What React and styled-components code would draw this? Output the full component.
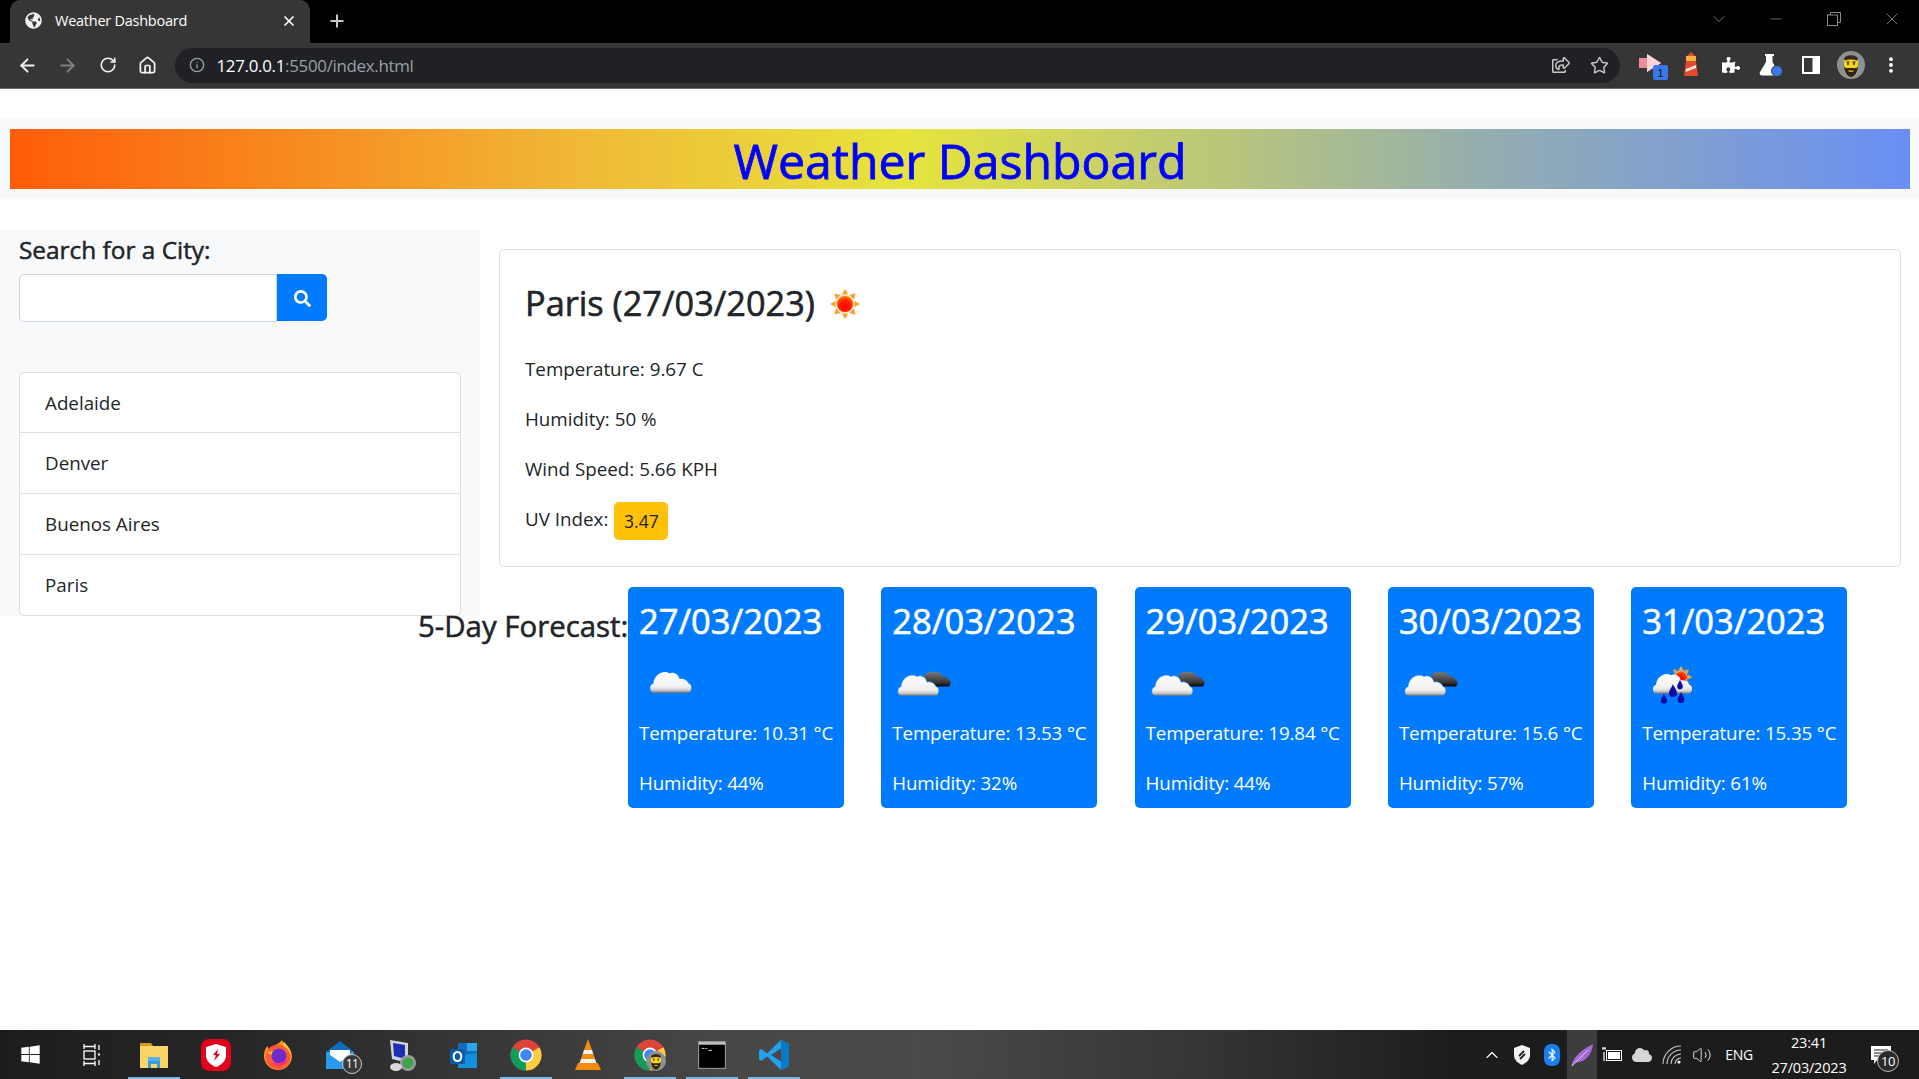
import React from 'react';
import styled, { createGlobalStyle } from 'styled-components';
import { ArrowLeft, ArrowRight, RotateCw, Home, Info, Star, MoreVertical, X, Plus, ChevronDown, Minus, ChevronUp, Volume2 } from 'lucide-react';
import { FaGlobeAmericas, FaSearch, FaPuzzlePiece, FaRegShareSquare, FaWindows, FaBluetoothB, FaCloud } from 'react-icons/fa';

const GlobalStyle = createGlobalStyle`
  html, body { margin: 0; padding: 0; height: 100%; background: #fff; }
  #root { height: 100%; }
  * { box-sizing: border-box; }
`;

const FONT = `"Open Sans", "Noto Sans", "Liberation Sans", sans-serif`;

const Screen = styled.div`
  height: 100vh;
  display: flex;
  flex-direction: column;
  overflow: hidden;
  font-family: ${FONT};
  color: #212529;
`;

/* browser frame */
const TabStrip = styled.div`
  height: 43px;
  background: #000;
  display: flex;
  align-items: flex-end;
  padding-left: 10px;
  flex-shrink: 0;
`;

const Tab = styled.div`
  width: 300px;
  height: 43px;
  background: #363636;
  border-radius: 10px 10px 0 0;
  display: flex;
  align-items: center;
  padding: 0 13px 2px 15px;
  color: #fff;
  font-size: 14.5px;
  letter-spacing: -0.25px;
`;

const TabTitle = styled.span`
  margin-left: 13px;
  flex: 1;
`;

const NewTab = styled.div`
  width: 54px;
  height: 43px;
  display: flex;
  align-items: center;
  justify-content: center;
  color: #c8c8c8;
  padding-bottom: 2px;
`;

const WindowControls = styled.div`
  margin-left: auto;
  margin-right: -2px;
  height: 43px;
  display: flex;
  align-items: center;
  padding: 0 0 6px;
  color: #8a8a8a;
`;

const WindowButton = styled.div`
  width: 58px;
  display: flex;
  justify-content: center;
  align-items: center;
  &:first-child { margin-right: -1px; }
`;

const Toolbar = styled.div`
  height: 46px;
  background: #363636;
  border-bottom: 1px solid #6e6e6e;
  display: flex;
  align-items: center;
  padding: 0 8px 1px 8px;
  flex-shrink: 0;
`;

const NavButton = styled.div`
  width: 40px;
  display: flex;
  justify-content: center;
  align-items: center;
  color: ${p => (p.$dim ? '#808080' : '#f2f2f2')};
`;

const Omnibox = styled.div`
  width: 1450px;
  height: 35px;
  margin-left: 7px;
  border-radius: 18px;
  background: #202124;
  display: flex;
  align-items: center;
  padding: 0 1px 0 14px;
  font-size: 16.9px;
  letter-spacing: -0.3px;
  color: #9aa0a6;
`;

const Host = styled.span`
  color: #fff;
`;

const UrlText = styled.span`
  margin-left: 12px;
  flex: 1;
`;

const OmniIcon = styled.div`
  width: 39px;
  display: flex;
  justify-content: center;
  color: #c4c7c5;
`;

const Extensions = styled.div`
  display: flex;
  align-items: center;
  margin-left: 11px;
`;

const ExtButton = styled.div`
  width: 40px;
  display: flex;
  justify-content: center;
  align-items: center;
  color: #fff;
`;

/* page */
const Page = styled.main`
  flex: 1;
  padding-top: 30px;
  background: #fff;
  min-height: 0;
`;

const HeaderBand = styled.header`
  background: #f8f9fa;
  padding: 10px 9px 10px 10px;
`;

const Banner = styled.h1`
  margin: 0;
  height: 60px;
  background: linear-gradient(to right, #ff5c0a 0%, #f0b936 30%, #e6e43c 47%, #93adb0 78%, #6a8ff4 100%);
  color: #0000ff;
  font-size: 48.2px;
  line-height: 62px;
  font-weight: 400;
  -webkit-text-stroke: 0.8px currentColor;
  text-align: center;
`;

const Dashboard = styled.div`
  margin-top: 30px;
  display: grid;
  grid-template-columns: 480px 1fr;
  grid-template-rows: 358px auto;
`;

const Sidebar = styled.aside`
  grid-area: 1 / 1 / 3 / 2;
  height: 387px;
  padding: 6px 19px 0;
  background: #f8f9fa;
  z-index: 0;
`;

const SearchLabel = styled.h5`
  margin: 0 0 9px;
  font-size: 24.4px;
  line-height: 30px;
  font-weight: 400;
  -webkit-text-stroke: 0.5px currentColor;
`;

const SearchRow = styled.div`
  display: flex;
  height: 48px;
`;

const SearchInput = styled.input`
  width: 258px;
  height: 48px;
  border: 1px solid #ced4da;
  border-radius: 5px 0 0 5px;
  background: #fff;
  font-family: inherit;
`;

const SearchButton = styled.button`
  width: 50px;
  height: 47px;
  border: none;
  border-radius: 0 5px 5px 0;
  background: #007bff;
  color: #fff;
  display: flex;
  align-items: center;
  justify-content: center;
  padding: 2px 0 0;
`;

const CityList = styled.ul`
  list-style: none;
  margin: 50px 0 0;
  padding: 0;
  width: 442px;
  background: #fff;
  border: 1px solid #dfdfdf;
  border-radius: 5px;
`;

const CityItem = styled.li`
  height: 61px;
  padding-left: 25px;
  font-size: 18.8px;
  line-height: 61px;
  border-bottom: 1px solid #dfdfdf;
  &:first-child { height: 60px; }
  &:last-child { border-bottom: none; height: 60px; }
`;

const CurrentColumn = styled.section`
  grid-area: 1 / 2 / 2 / 3;
  padding: 20px 18px 20px 19px;
`;

const CurrentCard = styled.div`
  height: 318px;
  border: 1px solid #dfdfdf;
  border-radius: 5px;
  padding: 33px 25px 0;
`;

const CityHeading = styled.h3`
  margin: 0 0 31px;
  display: flex;
  align-items: center;
  font-size: 34.3px;
  line-height: 40px;
  font-weight: 400;
  -webkit-text-stroke: 0.6px currentColor;
`;

const SunSvg = styled.svg`
  margin-left: 12px;
`;

const Stat = styled.p`
  margin: 0 0 20px;
  height: 30px;
  font-size: 18.8px;
  line-height: 30px;
  display: flex;
  align-items: center;
`;

const UvBadge = styled.span`
  width: 54px;
  height: 38px;
  margin: 4px 0 0 6px;
  background: #ffc107;
  border-radius: 5px;
  font-size: 17.5px;
  text-align: center;
  line-height: 39px;
`;

const Forecast = styled.section`
  grid-area: 2 / 1 / 3 / 3;
  z-index: 1;
  padding-left: 418px;
  display: flex;
  align-items: flex-start;
`;

const ForecastTitle = styled.h4`
  margin: 21px 0 0;
  width: 210px;
  font-size: 29.4px;
  line-height: 36px;
  font-weight: 400;
  -webkit-text-stroke: 0.55px currentColor;
  white-space: nowrap;
`;

const DayCards = styled.div`
  display: flex;
  gap: 37.3px;
`;

const DayCard = styled.article`
  width: ${p => p.$width}px;
  height: 221px;
  border-radius: 5px;
  background: #007bff;
  color: #fff;
  padding: 13px 0 0 11px;
  white-space: nowrap;
`;

const DayDate = styled.h3`
  margin: 0 0 0;
  font-size: 34.5px;
  line-height: 41px;
  font-weight: 400;
  -webkit-text-stroke: 0.6px currentColor;
`;

const WeatherBox = styled.div`
  height: 62px;
  margin-top: 12px;
`;

const DayLine = styled.p`
  margin: 3px 0 20px;
  font-size: 18.8px;
  line-height: 30px;
  letter-spacing: -0.15px;
`;

/* taskbar */
const Taskbar = styled.footer`
  height: 49px;
  flex-shrink: 0;
  display: flex;
  align-items: center;
  color: #fff;
  background: linear-gradient(90deg, #1d1d1d 0%, #262626 12%, #474747 38%, #4a4a4a 48%, #363636 62%, #1c1c1c 76%);
`;

const TaskButton = styled.div`
  position: relative;
  width: 62px;
  height: 49px;
  display: flex;
  align-items: center;
  justify-content: center;
  &:first-child { margin-left: -1px; }
  ${p => p.$open && `
    &::after {
      content: '';
      position: absolute;
      left: 5px;
      right: 5px;
      bottom: 0;
      height: 2px;
      background: #76b9ed;
    }
  `}
`;

const Tray = styled.div`
  margin-left: auto;
  height: 49px;
  display: flex;
  align-items: center;
`;

const TrayIcon = styled.div`
  width: 30px;
  height: 49px;
  display: flex;
  align-items: center;
  justify-content: center;
  color: #fff;
  background: ${p => (p.$active ? '#3d3d3d' : 'transparent')};
`;

const TrayLang = styled.div`
  width: 48px;
  margin-left: -2px;
  text-align: center;
  font-size: 14px;
  letter-spacing: -0.3px;
`;

const Clock = styled.div`
  width: 92px;
  text-align: center;
  font-size: 14.5px;
  line-height: 25px;
  letter-spacing: -0.2px;
`;

const Notification = styled.div`
  position: relative;
  width: 64px;
  display: flex;
  justify-content: center;
  padding-right: 12px;
`;

const NotifCount = styled.span`
  position: absolute;
  left: 22px;
  top: 4px;
  width: 22px;
  height: 22px;
  border-radius: 50%;
  border: 1px solid #bbb;
  background: #2a2a2a;
  font-size: 13px;
  line-height: 20px;
  text-align: center;
  letter-spacing: -0.5px;
`;

const MailCount = styled.span`
  position: absolute;
  left: 33px;
  top: 24px;
  width: 20px;
  height: 20px;
  border-radius: 50%;
  border: 1px solid #ccc;
  background: #3a3a3a;
  font-size: 12px;
  line-height: 18px;
  text-align: center;
  letter-spacing: -0.5px;
`;

const CloudGradients = () => (
  <defs>
    <linearGradient id="lightCloud" x1="0" y1="0" x2="0" y2="1">
      <stop offset="0" stopColor="#ffffff" />
      <stop offset="0.7" stopColor="#f0f0f0" />
      <stop offset="0.86" stopColor="#cfcfcf" />
      <stop offset="1" stopColor="#6f6f6f" />
    </linearGradient>
    <linearGradient id="darkCloud" x1="0" y1="0" x2="0" y2="1">
      <stop offset="0" stopColor="#7b7b7b" />
      <stop offset="0.7" stopColor="#3a3a3a" />
      <stop offset="1" stopColor="#050505" />
    </linearGradient>
    <radialGradient id="sunCore" cx="0.5" cy="0.65" r="0.7">
      <stop offset="0" stopColor="#ff0000" />
      <stop offset="0.6" stopColor="#ff2a00" />
      <stop offset="1" stopColor="#ffa000" />
    </radialGradient>
    <filter id="soft"><feGaussianBlur stdDeviation="0.4" /></filter>
  </defs>
);

const CLOUD = 'M0 23 C-5 23 -6 15 -1 13.5 C-1 6 8 -1 15 3.5 C18 1.5 24 3.5 25 9 C29 8 33 10.5 34 13.5 C38 13.5 38 23 33 23 Z';

const Sun = ({ cx, cy, r }) => {
  const rays = [0, 45, 90, 135, 180, 225, 270, 315];
  return (
    <g>
      {rays.map(a => (
        <polygon
          key={a}
          points={`${cx - r * 0.42},${cy - r * 1.18} ${cx},${cy - r * 1.85} ${cx + r * 0.42},${cy - r * 1.18}`}
          fill={a % 90 === 0 ? '#ffa31a' : '#ff9d2e'}
          transform={`rotate(${a} ${cx} ${cy})`}
        />
      ))}
      <circle cx={cx} cy={cy} r={r * 1.12} fill="#ffd9a0" />
      <circle cx={cx} cy={cy} r={r} fill="url(#sunCore)" />
    </g>
  );
};

const SunIcon = () => (
  <SunSvg width="40" height="40" viewBox="0 0 40 40">
    <CloudGradients />
    <g filter="url(#soft)"><Sun cx={18} cy={21} r={8} /></g>
  </SunSvg>
);

const Drop = ({ x, y, s = 1 }) => (
  <path
    transform={`translate(${x} ${y}) scale(${s})`}
    d="M0 -7 C1.5 -3 4 -1 4 2 A4 4 0 0 1 -4 2 C-4 -1 -1.5 -3 0 -7 Z"
    fill="#0a0ea8"
  />
);

const WeatherIcon = ({ kind }) => (
  <svg width="62" height="62" viewBox="0 0 62 62">
    <CloudGradients />
    <g filter="url(#soft)">
      {kind === 'cloud' && (
        <path transform="translate(15.5 17) scale(1)" d={CLOUD} fill="url(#lightCloud)" />
      )}
      {kind === 'overcast' && (
        <>
          <path transform="translate(32 17) scale(0.72)" d={CLOUD} fill="url(#darkCloud)" />
          <path transform="translate(10 20) scale(1)" d={CLOUD} fill="url(#lightCloud)" stroke="#007bff" strokeWidth="0.6" />
        </>
      )}
      {kind === 'rain' && (
        <>
          <Sun cx={39} cy={24} r={6} />
          <path transform="translate(15 19) scale(0.95)" d={CLOUD} fill="url(#lightCloud)" />
          <Drop x={31} y={38} />
          <Drop x={38} y={32} s={0.7} />
          <Drop x={22} y={46} s={0.8} />
          <Drop x={39} y={45} s={0.85} />
        </>
      )}
    </g>
  </svg>
);

const ToolbarShare = () => <FaRegShareSquare size={18} color="#c4c7c5" />;

const ExtRecorder = () => (
  <svg width="34" height="30" viewBox="0 0 34 30">
    <path d="M5 8h8V4l14 9-14 9v-4H5z" fill="#f28b9a" />
    <path d="M13 4l14 9-14 9z" fill="#fbd5da" />
    <rect x="19" y="15" width="15" height="15" rx="2" fill="#3b78e7" />
    <text x="26.5" y="27" fontSize="11" fontFamily="Liberation Sans, sans-serif" fill="#111" textAnchor="middle">1</text>
  </svg>
);

const ExtLighthouse = () => (
  <svg width="16" height="26" viewBox="0 0 16 26">
    <path d="M8 0l4 4H4z" fill="#e8492e" />
    <rect x="3" y="4" width="10" height="5" fill="#f6b13c" />
    <path d="M3 9h10l2 15H1z" fill="#e8492e" />
    <path d="M3 17l10-4v3L2.6 20z" fill="#fde9d8" />
  </svg>
);

const ExtFlask = () => (
  <svg width="26" height="26" viewBox="0 0 26 26">
    <path d="M7 2h9v2h-1.5v6L20 20c1 2-.5 3.5-2 3.5H4c-1.5 0-3-1.5-2-3.5l6-10V4H7z" fill="#fff" />
    <circle cx="19" cy="19" r="5.5" fill="#3b78e7" stroke="#363636" strokeWidth="1" />
  </svg>
);

const ExtPanel = () => (
  <svg width="18" height="18" viewBox="0 0 18 18">
    <rect width="18" height="18" fill="#fff" />
    <rect x="2" y="2" width="8.5" height="14" fill="#363636" />
  </svg>
);

const Avatar = ({ size = 28 }) => (
  <svg width={size} height={size} viewBox="0 0 28 28">
    <circle cx="14" cy="14" r="14" fill="#8c9196" />
    <path d="M7 9c0-4 14-4 14 0v9c0 5-4 8-7 8s-7-3-7-8z" fill="#f6d51f" />
    <path d="M7 8c1-5 13-5 14 0l-1 1.5c-3-1.5-9-1.5-12 0z" fill="#3a2a1e" />
    <path d="M7 15c1 3 3 2 7 2s6 1 7-2c0 7-4 11-7 11s-7-4-7-11z" fill="#2b221c" />
    <rect x="9.5" y="10.5" width="3" height="1.2" fill="#3a2a1e" />
    <rect x="15.5" y="10.5" width="3" height="1.2" fill="#3a2a1e" />
    <circle cx="11" cy="13" r="0.9" fill="#222" />
    <circle cx="17" cy="13" r="0.9" fill="#222" />
    <rect x="11.5" y="19.5" width="5" height="1.2" fill="#f6d51f" />
  </svg>
);

const RestoreIcon = () => (
  <svg width="14" height="14" viewBox="0 0 14 14" fill="none" stroke="currentColor">
    <rect x="0.5" y="3" width="10" height="10.5" />
    <path d="M3.5 3V0.5H13.5V10.5H10.5" />
  </svg>
);

const TaskViewIcon = () => (
  <svg width="22" height="22" viewBox="0 0 22 22" fill="none" stroke="#fff" strokeWidth="1.3">
    <path d="M3 2.5h11M3 19.5h11M3 0v5M14 0v5M3 17v5M14 17v5" />
    <rect x="3" y="7" width="11" height="8" />
    <path d="M18 1v5M18 16v5" />
    <rect x="17" y="9.5" width="2" height="2" fill="#fff" stroke="none" />
  </svg>
);

const ExplorerIcon = () => (
  <svg width="30" height="30" viewBox="0 0 30 30">
    <path d="M1 3h11l2 3H1z" fill="#d29b26" />
    <rect x="1" y="6" width="28" height="22" fill="#fbd467" />
    <path d="M9 28v-7h12v7h-3v-4h-6v4z" fill="#3b9be0" />
    <rect x="9" y="17" width="12" height="4" fill="#57b3ee" />
  </svg>
);

const BraveIcon = () => (
  <svg width="30" height="32" viewBox="0 0 30 32">
    <rect x="0" y="0" width="30" height="32" rx="8" fill="#e2001b" />
    <path d="M15 5l10 3v9c0 5-5 9-10 11C10 26 5 22 5 17V8z" fill="#fff" />
    <path d="M17 10l-5 6h3l-2 6 6-7h-3z" fill="#e2001b" />
  </svg>
);

const FirefoxIcon = () => (
  <svg width="32" height="32" viewBox="0 0 32 32">
    <path d="M20 1c1 4 9 6 10 16A14 14 0 0 1 2 17C2 12 4 8 6 7c0 3 1 4 2 5 1-5 8-6 12-11z" fill="#ff9521" />
    <circle cx="16" cy="18" r="12.5" fill="#ff5a36" />
    <path d="M5 14c3-3 5-1 8-1l-3 3z" fill="#ffb22c" />
    <circle cx="17" cy="17" r="7.5" fill="#6e2bc9" />
    <path d="M9 24c6 5 15 3 18-5-3 4-10 6-18 5z" fill="#ff2d6f" />
    <path d="M22 3c4 4 7 8 7 13-2-5-4-7-8-9z" fill="#ffcb2e" />
  </svg>
);

const MailIcon = () => (
  <svg width="30" height="30" viewBox="0 0 30 30">
    <path d="M1 12L15 1l14 11v3H1z" fill="#0f6cbd" />
    <rect x="1" y="12" width="28" height="17" fill="#3fa4ec" />
    <path d="M5 10h20v6l-10 7-10-7z" fill="#fff" />
    <path d="M1 12l14 10 14-10v17H1z" fill="#2a9bea" />
  </svg>
);

const RemoteIcon = () => (
  <svg width="28" height="34" viewBox="0 0 28 34">
    <path d="M2 2l18 3v20L4 21z" fill="#cfd3da" />
    <path d="M5 5l12 2v14L6 18z" fill="#1c2fb0" />
    <circle cx="20" cy="25" r="8" fill="#9a9a9a" />
    <circle cx="20" cy="25" r="5.5" fill="#3fa34d" />
    <ellipse cx="8" cy="29" rx="6" ry="4" fill="#d9d9d9" />
  </svg>
);

const OutlookIcon = () => (
  <svg width="30" height="30" viewBox="0 0 30 30">
    <rect x="9" y="3" width="19" height="25" rx="1" fill="#0f6cbd" />
    <rect x="18" y="3" width="10" height="8" fill="#28a8ea" />
    <path d="M9 16l19-3v15H9z" fill="#1490df" />
    <rect x="1" y="9" width="15" height="15" rx="1.5" fill="#0a5ea8" />
    <ellipse cx="8.5" cy="16.5" rx="3.8" ry="4.6" fill="none" stroke="#fff" strokeWidth="2" />
  </svg>
);

const ChromeIcon = ({ overlay }) => (
  <svg width="32" height="32" viewBox="0 0 32 32">
    <circle cx="16" cy="16" r="15.5" fill="#db4437" />
    <path d="M16 16L2.6 8.2A15.5 15.5 0 0 0 16 31.5L23 18z" fill="#0f9d58" />
    <path d="M16 16l13.4-7.8A15.5 15.5 0 0 1 16 31.5z" fill="#ffcd40" />
    <circle cx="16" cy="16" r="7.4" fill="#fff" />
    <circle cx="16" cy="16" r="5.8" fill="#4285f4" />
    {overlay && (
      <g transform="translate(12 12)"><Avatar size={20} /></g>
    )}
  </svg>
);

const VlcIcon = () => (
  <svg width="28" height="32" viewBox="0 0 28 32">
    <path d="M14 0l4 11H10z" fill="#f28c0f" />
    <path d="M10 11h8l1.4 4H8.6z" fill="#f4f4f4" />
    <path d="M8.6 15h10.8l1.6 5H7z" fill="#f28c0f" />
    <path d="M7 20h14l1.4 4H5.6z" fill="#f4f4f4" />
    <path d="M4 24h20l3 7H1z" fill="#f28c0f" />
  </svg>
);

const TerminalIcon = () => (
  <svg width="28" height="28" viewBox="0 0 30 30">
    <rect x="0.5" y="0.5" width="29" height="29" fill="#000" stroke="#8f8f8f" strokeWidth="1.5" />
    <rect x="1" y="1" width="28" height="3" fill="#bdbdbd" />
    <path d="M4 8h3M8 8h2M11 10h4" stroke="#ddd" strokeWidth="1" />
  </svg>
);

const VscodeIcon = () => (
  <svg width="32" height="32" viewBox="0 0 32 32">
    <path
      fillRule="evenodd"
      d="M23 1L9 14.5 3.5 10 1 11.5v9L3.5 22 9 17.5 23 31l8-4V5zM23 9.5L13 16l10 6.5z"
      fill="#24a0ed"
    />
    <path d="M23 1l8 4v22l-8 4v-8.5V9.5z" fill="#0a78c4" />
  </svg>
);

const ShieldTray = () => (
  <svg width="18" height="20" viewBox="0 0 18 20">
    <path d="M9 0l8 3v7c0 5-4 8-8 10-4-2-8-5-8-10V3z" fill="#f2f2f2" />
    <path d="M6 11l5-5M7 14l5-5" stroke="#222" strokeWidth="1.8" />
  </svg>
);

const BluetoothTray = () => (
  <svg width="16" height="22" viewBox="0 0 16 22">
    <rect width="16" height="22" rx="7" fill="#1a80f0" />
    <g transform="translate(1 4)"><FaBluetoothB size={14} color="#fff" /></g>
  </svg>
);

const FeatherTray = () => (
  <svg width="24" height="24" viewBox="0 0 24 24">
    <path d="M1 23c2-6 6-14 22-22-1 10-7 17-14 18l-4 1z" fill="#a66ad8" />
    <path d="M2 23L18 7" stroke="#e3c4f6" strokeWidth="1" />
  </svg>
);

const BatteryTray = () => (
  <svg width="22" height="16" viewBox="0 0 22 16">
    <rect x="5.5" y="3.5" width="15" height="10" fill="#1d1d1d" stroke="#fff" />
    <rect x="7" y="5" width="12" height="7" fill="#fff" />
    <path d="M1 2h4M2 0v2M4 0v2M3 5v9" stroke="#fff" strokeWidth="1.2" />
  </svg>
);

const WifiTray = () => (
  <svg width="20" height="20" viewBox="0 0 20 20" fill="none" stroke="#c8c8c8" strokeWidth="1.1">
    <path d="M1 19A18 18 0 0 1 19 1M5 19A14 14 0 0 1 19 5M9 19A10 10 0 0 1 19 9M13 19A6 6 0 0 1 19 13" />
    <circle cx="17" cy="17" r="1.6" fill="#fff" stroke="none" />
  </svg>
);

const NotifIcon = () => (
  <svg width="20" height="18" viewBox="0 0 20 18">
    <path d="M0 0h20v14H6l-3 4v-4H0z" fill="#fff" />
    <path d="M3 4h14M3 7h14M3 10h9" stroke="#222" strokeWidth="1" />
  </svg>
);

const CITIES = ['Adelaide', 'Denver', 'Buenos Aires', 'Paris'];

const FORECAST = [
  { date: '27/03/2023', icon: 'cloud', temp: '10.31', hum: 44, width: 216 },
  { date: '28/03/2023', icon: 'overcast', temp: '13.53', hum: 32, width: 216 },
  { date: '29/03/2023', icon: 'overcast', temp: '19.84', hum: 44, width: 216 },
  { date: '30/03/2023', icon: 'overcast', temp: '15.6', hum: 57, width: 206 },
  { date: '31/03/2023', icon: 'rain', temp: '15.35', hum: 61, width: 216 },
];

const TASK_APPS = [
  { key: 'win', node: <FaWindows size={21} color="#fff" /> },
  { key: 'view', node: <TaskViewIcon /> },
  { key: 'explorer', node: <ExplorerIcon />, open: true },
  { key: 'brave', node: <BraveIcon /> },
  { key: 'firefox', node: <FirefoxIcon /> },
  { key: 'mail', node: <MailIcon />, badge: '11' },
  { key: 'remote', node: <RemoteIcon /> },
  { key: 'outlook', node: <OutlookIcon /> },
  { key: 'chrome', node: <ChromeIcon />, open: true },
  { key: 'vlc', node: <VlcIcon /> },
  { key: 'chrome2', node: <ChromeIcon overlay />, open: true },
  { key: 'terminal', node: <TerminalIcon />, open: true },
  { key: 'vscode', node: <VscodeIcon />, open: true },
];

const App = () => (
  <Screen>
    <GlobalStyle />
    <TabStrip>
      <Tab>
        <FaGlobeAmericas size={17} color="#f1f1f1" />
        <TabTitle>Weather Dashboard</TabTitle>
        <X size={16} strokeWidth={2.6} color="#fff" />
      </Tab>
      <NewTab><Plus size={20} strokeWidth={2.4} /></NewTab>
      <WindowControls>
        <WindowButton><ChevronDown size={20} strokeWidth={1} /></WindowButton>
        <WindowButton><Minus size={18} strokeWidth={1} /></WindowButton>
        <WindowButton><RestoreIcon /></WindowButton>
        <WindowButton><X size={20} strokeWidth={1} /></WindowButton>
      </WindowControls>
    </TabStrip>
    <Toolbar>
      <NavButton><ArrowLeft size={21} strokeWidth={2.2} /></NavButton>
      <NavButton $dim><ArrowRight size={21} strokeWidth={2.2} /></NavButton>
      <NavButton><RotateCw size={18} strokeWidth={2.2} /></NavButton>
      <NavButton><Home size={19} strokeWidth={2.2} /></NavButton>
      <Omnibox>
        <Info size={16} color="#9aa0a6" />
        <UrlText><Host>127.0.0.1</Host>:5500/index.html</UrlText>
        <OmniIcon><ToolbarShare /></OmniIcon>
        <OmniIcon><Star size={19} strokeWidth={1.8} /></OmniIcon>
      </Omnibox>
      <Extensions>
        <ExtButton><ExtRecorder /></ExtButton>
        <ExtButton><ExtLighthouse /></ExtButton>
        <ExtButton><FaPuzzlePiece size={18} /></ExtButton>
        <ExtButton><ExtFlask /></ExtButton>
        <ExtButton><ExtPanel /></ExtButton>
        <ExtButton><Avatar /></ExtButton>
        <ExtButton><MoreVertical size={20} strokeWidth={2.6} /></ExtButton>
      </Extensions>
    </Toolbar>

    <Page>
      <HeaderBand>
        <Banner>Weather Dashboard</Banner>
      </HeaderBand>
      <Dashboard>
        <Sidebar>
          <SearchLabel>Search for a City:</SearchLabel>
          <SearchRow>
            <SearchInput />
            <SearchButton><FaSearch size={17} /></SearchButton>
          </SearchRow>
          <CityList>
            {CITIES.map(city => <CityItem key={city}>{city}</CityItem>)}
          </CityList>
        </Sidebar>
        <CurrentColumn>
          <CurrentCard>
            <CityHeading>Paris (27/03/2023)<SunIcon /></CityHeading>
            <Stat>Temperature: 9.67 C</Stat>
            <Stat>Humidity: 50 %</Stat>
            <Stat>Wind Speed: 5.66 KPH</Stat>
            <Stat>UV Index:<UvBadge>3.47</UvBadge></Stat>
          </CurrentCard>
        </CurrentColumn>
        <Forecast>
          <ForecastTitle>5-Day Forecast:</ForecastTitle>
          <DayCards>
            {FORECAST.map(day => (
              <DayCard key={day.date} $width={day.width}>
                <DayDate>{day.date}</DayDate>
                <WeatherBox><WeatherIcon kind={day.icon} /></WeatherBox>
                <DayLine>Temperature: {day.temp} °C</DayLine>
                <DayLine>Humidity: {day.hum}%</DayLine>
              </DayCard>
            ))}
          </DayCards>
        </Forecast>
      </Dashboard>
    </Page>

    <Taskbar>
      {TASK_APPS.map(app => (
        <TaskButton key={app.key} $open={app.open}>
          {app.node}
          {app.badge && <MailCount>{app.badge}</MailCount>}
        </TaskButton>
      ))}
      <Tray>
        <TrayIcon><ChevronUp size={20} strokeWidth={1.4} /></TrayIcon>
        <TrayIcon><ShieldTray /></TrayIcon>
        <TrayIcon><BluetoothTray /></TrayIcon>
        <TrayIcon $active><FeatherTray /></TrayIcon>
        <TrayIcon><BatteryTray /></TrayIcon>
        <TrayIcon><FaCloud size={20} color="#d6d6d6" /></TrayIcon>
        <TrayIcon><WifiTray /></TrayIcon>
        <TrayIcon><Volume2 size={20} strokeWidth={1} /></TrayIcon>
        <TrayLang>ENG</TrayLang>
        <Clock>23:41<br />27/03/2023</Clock>
        <Notification>
          <NotifIcon />
          <NotifCount>10</NotifCount>
        </Notification>
      </Tray>
    </Taskbar>
  </Screen>
);

export default App;
